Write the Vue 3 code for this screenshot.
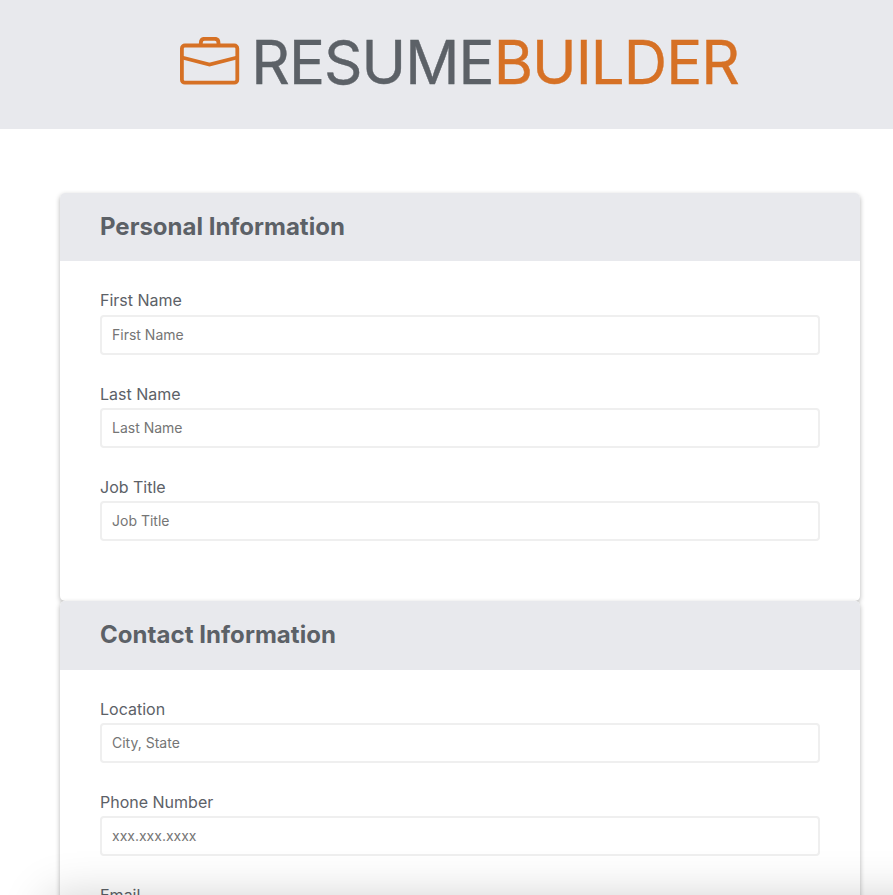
<script setup>
const sections = [
  {
    title: 'Personal Information',
    fields: [
      { id: 'first', label: 'First Name', placeholder: 'First Name' },
      { id: 'last', label: 'Last Name', placeholder: 'Last Name' },
      { id: 'job', label: 'Job Title', placeholder: 'Job Title' },
    ],
  },
  {
    title: 'Contact Information',
    fields: [
      { id: 'location', label: 'Location', placeholder: 'City, State' },
      { id: 'phone', label: 'Phone Number', placeholder: 'xxx.xxx.xxxx' },
      { id: 'email', label: 'Email', placeholder: 'Email' },
    ],
  },
]
</script>

<template>
  <div class="page">
    <header class="banner">
      <svg class="logo" viewBox="0 0 60 48" fill="none" stroke="#d67125" stroke-width="3.8" stroke-linejoin="round">
        <rect x="1.900" y="8.500" width="55.400" height="37.200" rx="3" />
        <path d="M20.800 8.500V6Q20.800 1.800 24.500 1.800H34.800Q38.500 1.800 38.500 6V8.500" />
        <path d="M2 20.500L29.500 27.600L57.200 20.500" stroke-linejoin="miter" />
      </svg>
      <h1 class="brand">RESUME<span class="accent">BUILDER</span></h1>
    </header>
    <main class="form">
      <section v-for="section in sections" :key="section.title" class="card">
        <h2 class="card-title">{{ section.title }}</h2>
        <div class="fields">
          <div v-for="field in section.fields" :key="field.id" class="field">
            <label :for="field.id">{{ field.label }}</label>
            <input :id="field.id" type="text" :placeholder="field.placeholder" />
          </div>
        </div>
      </section>
    </main>
    <div class="sheet"></div>
  </div>
</template>

<style>
html,
body {
  background: #fff;
  overflow: hidden;
}
</style>

<style scoped>
.page {
  height: 895px;
  overflow: hidden;
  position: relative;
  font-family: Inter, "Liberation Sans", sans-serif;
  color: #5c6167;
}
.banner {
  box-sizing: border-box;
  height: 128.600px;
  background: #e8e9ed;
  display: flex;
  padding: 25.500px 0 0 180px;
}
.logo {
  flex: none;
  width: 60px;
  height: 48px;
  margin-top: 11.500px;
}
.brand {
  margin: 0 0 0 11.300px;
  font-size: 60px;
  font-weight: 400;
  letter-spacing: -0.950px;
  line-height: 73px;
  white-space: nowrap;
  -webkit-text-stroke: 0.400px currentColor;
}
.accent {
  color: #d67125;
}
.form {
  width: 800px;
  margin: 64.400px 0 0 60px;
}
.card {
  box-sizing: border-box;
  height: 408.220px;
  border-radius: 5px;
  background: #fff;
  box-shadow: 0 2px 5px rgba(0, 0, 0, 0.3);
}
.card-title {
  margin: 0;
  box-sizing: border-box;
  height: 68.400px;
  padding: 0 40px;
  border-radius: 5px 5px 0 0;
  background: #e8e9ed;
  font-size: 24px;
  font-weight: 700;
  line-height: 68px;
}
.card:nth-child(2) .card-title {
  letter-spacing: 0.050px;
}
.fields {
  display: flex;
  flex-direction: column;
  gap: 30px;
  padding: 29.950px 40px 0;
}
.field {
  display: flex;
  flex-direction: column;
  gap: 4px;
}
label {
  font-size: 16px;
  line-height: 19.200px;
}
input {
  box-sizing: border-box;
  width: 100%;
  height: 40px;
  margin: 0;
  padding: 0 10px;
  border: 2px solid #efefef;
  border-radius: 4px;
  font-family: inherit;
  font-size: 14px;
  background: #fff;
}
input::placeholder {
  color: #757575;
}
.sheet {
  position: absolute;
  top: 897px;
  left: 48px;
  width: 1000px;
  height: 400px;
  box-shadow: 0 0 44px rgba(0, 0, 0, 0.19);
}
</style>
